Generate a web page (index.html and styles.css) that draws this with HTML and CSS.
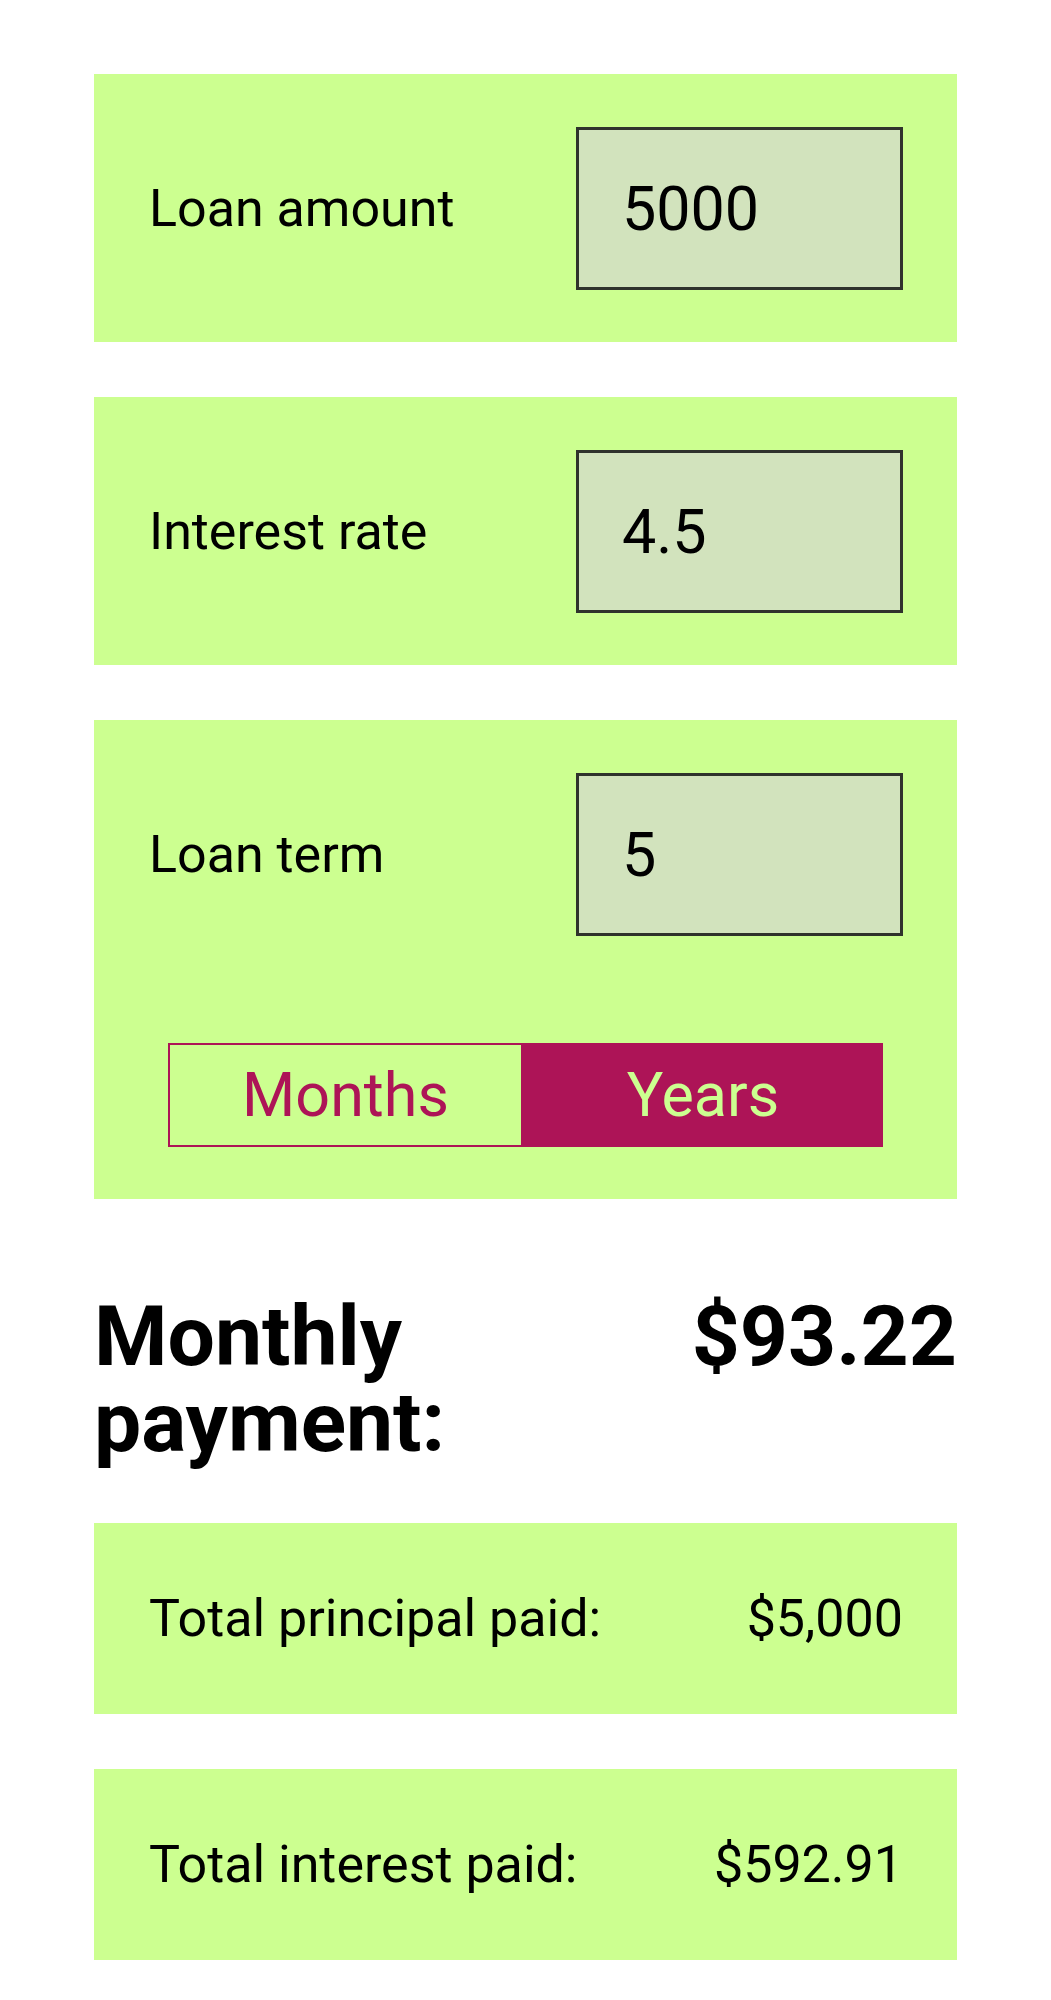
FILE: index.html
```html
<!DOCTYPE html>
<html>
<head>
<meta charset="utf-8">
<link rel="stylesheet" href="styles.css">
</head>
<body>
<main class="calc">
  <section class="card">
    <div class="field">
      <label class="label">Loan amount</label>
      <div class="input">5000</div>
    </div>
  </section>
  <section class="card">
    <div class="field">
      <label class="label">Interest rate</label>
      <div class="input">4.5</div>
    </div>
  </section>
  <section class="card">
    <div class="field">
      <label class="label">Loan term</label>
      <div class="input">5</div>
    </div>
    <div class="segment">
      <button class="seg seg-off">Months</button>
      <button class="seg seg-on">Years</button>
    </div>
  </section>
  <div class="monthly">
    <div class="monthly-label">Monthly payment:</div>
    <div class="monthly-value">$93.22</div>
  </div>
  <section class="card result">
    <span class="label">Total principal paid:</span>
    <span class="label">$5,000</span>
  </section>
  <section class="card result">
    <span class="label">Total interest paid:</span>
    <span class="label">$592.91</span>
  </section>
</main>
</body>
</html>
```

FILE: styles.css
```css
* { box-sizing: border-box; }
html, body { margin: 0; padding: 0; background: #ffffff; }
body { font-family: Roboto, "Noto Sans", sans-serif; color: #000; }

.calc {
  width: 863px;
  margin: 74px auto 0;
  display: flex;
  flex-direction: column;
}

.card {
  background: #ccff90;
  padding: 53px 54px 52px 55px;
  margin-bottom: 55px;
}

.field {
  display: flex;
  justify-content: space-between;
  align-items: center;
}

.label {
  font-size: 52px;
  line-height: 61px;
}

.input {
  width: 327px;
  height: 163px;
  border: 3px solid #2f332c;
  background: #d2e3bd;
  font-size: 61px;
  display: flex;
  align-items: center;
  padding-left: 43px;
}

.segment {
  display: flex;
  margin: 107px 20px 0 19px;
  height: 104px;
}

.seg {
  flex: 1;
  font-family: Roboto, "Noto Sans", sans-serif;
  font-size: 61px;
  border: 2px solid #ad1457;
  margin: 0;
  padding: 0;
}

.seg-off {
  background: transparent;
  color: #ad1457;
  flex: 0 0 355px;
}

.seg-on {
  background: #ad1457;
  color: #ccff90;
}

.monthly {
  display: flex;
  justify-content: space-between;
  align-items: flex-start;
  margin: 40px 0 57px;
  font-weight: 700;
  font-size: 84px;
  line-height: 86px;
}

.monthly-label { width: 400px; }

.result {
  display: flex;
  justify-content: space-between;
  align-items: center;
  padding-top: 65px;
  padding-bottom: 65px;
}
```
